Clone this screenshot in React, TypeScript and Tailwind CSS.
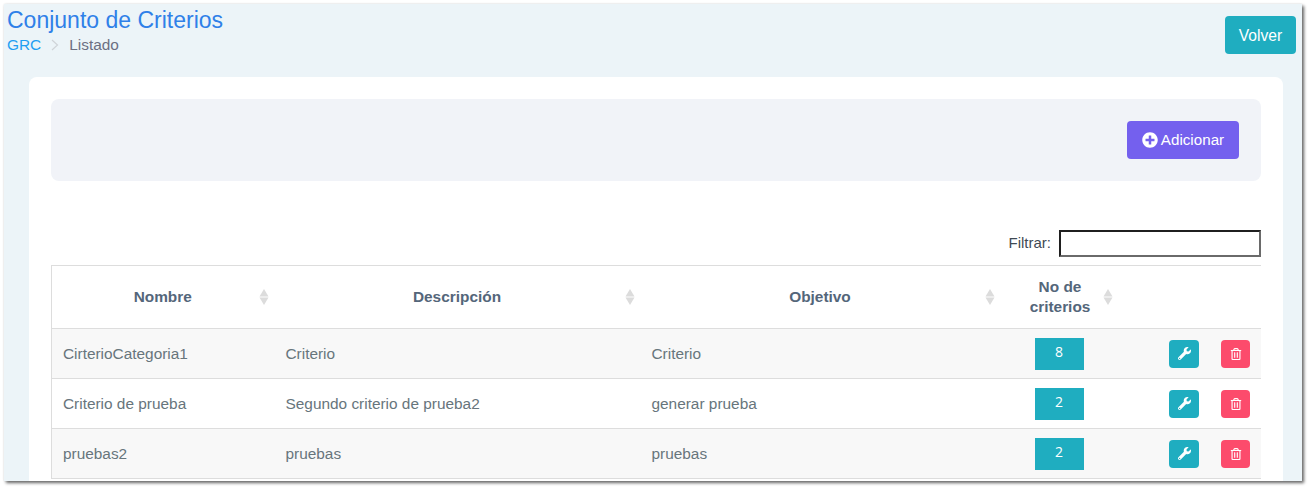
import { FaPlusCircle, FaRegTrashAlt, FaWrench } from 'react-icons/fa';

const rows = [
  { nombre: 'CirterioCategoria1', descripcion: 'Criterio', objetivo: 'Criterio', total: 8 },
  { nombre: 'Criterio de prueba', descripcion: 'Segundo criterio de prueba2', objetivo: 'generar prueba', total: 2 },
  { nombre: 'pruebas2', descripcion: 'pruebas', objetivo: 'pruebas', total: 2 },
];

function SortIcon() {
  return (
    <svg width="10" height="16" viewBox="0 0 10 16" className="mr-1.5 shrink-0">
      <path d="M5 0 L9.5 7.5 L0.5 7.5 Z" fill="#dcdcdc" />
      <path d="M5 16 L9.5 8.5 L0.5 8.5 Z" fill="#dcdcdc" />
    </svg>
  );
}

function HeaderCell({ label, width }: { label: string; width: string }) {
  return (
    <th className={`${width} border-b border-[#dddddd] pl-[15px] font-bold text-[#54667a]`}>
      <div className="flex items-center">
        <span className="flex-1">{label}</span>
        <SortIcon />
      </div>
    </th>
  );
}

export default function App() {
  return (
    <div className="h-[490px] overflow-hidden bg-white pl-1 pr-[9px] pt-1 font-['Liberation_Sans',sans-serif] text-[15.4px] text-[#67757c]">
      <div className="h-[477px] overflow-hidden bg-[#ecf4f8] shadow-[2px_2px_3px_#666,0_0_2px_#e5e5e5]">
        {/* Page title */}
        <div className="flex justify-between pl-[3px] pr-1.5 pt-[3px]">
          <div>
            <h3 className="text-[23px] leading-[27px] text-[#2f80e8]">Conjunto de Criterios</h3>
            <div className="mt-px flex items-center leading-5">
              <span className="text-[#1e9ff2]">GRC</span>
              <svg width="8" height="12" viewBox="0 0 8 12" className="mx-2.5">
                <path d="M1 1 L6.5 6 L1 11" fill="none" stroke="#cfd4d8" strokeWidth="1.2" />
              </svg>
              <span className="text-[#6b6f82]">Listado</span>
            </div>
          </div>
          <button className="mt-[9px] h-[38px] w-[71px] rounded bg-[#1fadc0] pt-0.5 text-[15.6px] text-white">Volver</button>
        </div>

        {/* Card */}
        <div className="ml-[25px] mr-[19px] mt-[22px] h-[500px] rounded-lg bg-white px-[22px] pt-[22px]">
          <div className="flex h-[82px] items-center justify-end rounded-lg bg-[#f1f3f8] pr-[22px]">
            <button className="flex h-[38px] w-[112px] items-center justify-center gap-[3px] rounded bg-[#7460ee] text-[15.2px] text-white">
              <FaPlusCircle className="text-base" />
              Adicionar
            </button>
          </div>

          <div className="mt-[49px] flex items-center justify-end gap-2">
            <label className="text-[15px] text-[#3f4a54]">Filtrar:</label>
            <input className="h-[27px] w-[202px] border-2 border-b-[#6a6a6a] border-l-[#1f1f1f] border-r-[#6a6a6a] border-t-[#1f1f1f] bg-white" />
          </div>

          <table className="mt-2 w-[1210px] table-fixed border-collapse border-l border-t border-[#dddddd]">
            <thead>
              <tr className="h-[63px]">
                <HeaderCell label="Nombre" width="w-[223px]" />
                <HeaderCell label="Descripción" width="w-[366px]" />
                <HeaderCell label="Objetivo" width="w-[360px]" />
                <th className="w-[123px] border-b border-[#dddddd] pl-[17px] font-bold leading-5 text-[#54667a]">
                  <div className="flex items-center">
                    <span className="w-[85px]">No de criterios</span>
                    <SortIcon />
                  </div>
                </th>
                <th className="border-b border-[#dddddd]" />
              </tr>
            </thead>
            <tbody>
              {rows.map((row, i) => (
                <tr key={row.nombre} className={`h-[50px] border-b border-[#dddddd] ${i % 2 === 0 ? 'bg-[#f8f8f8]' : 'bg-white'}`}>
                  <td className="pl-[11px]">{row.nombre}</td>
                  <td className="pl-[11px]">{row.descripcion}</td>
                  <td className="pl-[11px]">{row.objetivo}</td>
                  <td className="pl-[11px]">
                    <div className="ml-[23px] flex h-8 w-[49px] items-start justify-center bg-[#1fadc0] pt-1 font-['Open_Sans',sans-serif] text-sm leading-5 text-white">
                      {row.total}
                    </div>
                  </td>
                  <td>
                    <div className="flex items-center justify-end gap-[22px] pr-[11px]">
                      <button className="flex h-[28px] w-[30px] items-center justify-center rounded bg-[#1fadc0] text-[13px] text-white">
                        <FaWrench />
                      </button>
                      <button className="flex h-[28px] w-[29px] items-center justify-center rounded bg-[#fc4b6c] text-xs text-white">
                        <FaRegTrashAlt />
                      </button>
                    </div>
                  </td>
                </tr>
              ))}
            </tbody>
          </table>
        </div>
      </div>
    </div>
  );
}
